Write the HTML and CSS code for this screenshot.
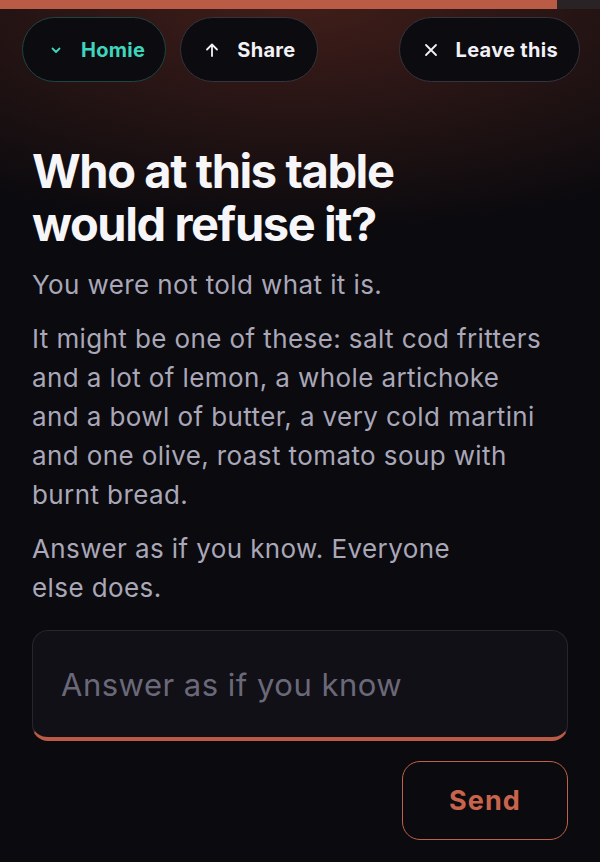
FILE: index.html
```html
<!DOCTYPE html>
<html lang="en">
<head>
<meta charset="utf-8">
<title>Who at this table</title>
<link rel="stylesheet" href="styles.css">
</head>
<body>
<div class="page">
  <div class="progress"><div class="progress-fill" style="width: 92.8%"></div></div>
  <nav class="topbar">
    <div class="topbar-left">
      <button class="pill pill-homie" type="button">
        <svg class="icon icon-chev" viewBox="0 0 16 16" aria-hidden="true"><path d="M4.5 6.5 8 10l3.5-3.5"/></svg>
        <span>Homie</span>
      </button>
      <button class="pill" type="button">
        <svg class="icon" viewBox="0 0 16 16" aria-hidden="true"><path d="M8 14V2.5M3 7.5l5-5 5 5"/></svg>
        <span>Share</span>
      </button>
    </div>
    <button class="pill" type="button">
      <svg class="icon" viewBox="0 0 16 16" aria-hidden="true"><path d="M3 3l10 10M13 3L3 13"/></svg>
      <span>Leave this</span>
    </button>
  </nav>
  <main class="content">
    <h1 class="title">Who at this table would refuse it?</h1>
    <p class="lead">You were not told what it is.</p>
    <p class="lead">It might be one of these: salt cod fritters and a lot of lemon, a whole artichoke and a bowl of butter, a very cold martini and one olive, roast tomato soup with burnt bread.</p>
    <p class="lead lead-narrow">Answer as if you know. Everyone else does.</p>
    <form class="answer" onsubmit="return false">
      <div class="field">
        <input class="field-input" type="text" placeholder="Answer as if you know">
      </div>
      <div class="actions">
        <button class="send" type="submit">Send</button>
      </div>
    </form>
  </main>
</div>
</body>
</html>
```

FILE: styles.css
```css
* { box-sizing: border-box; }
html, body { margin: 0; padding: 0; }
body {
  background: #0b0a0e;
  font-family: Inter, "Noto Sans", "Liberation Sans", sans-serif;
  color: #a9a7b8;
}
.page {
  min-height: 862px;
  background:
    radial-gradient(ellipse 560px 230px at 300px 0px, rgba(118, 50, 38, 0.5), rgba(118, 50, 38, 0) 100%),
    #0b0a0e;
}
.progress {
  height: 9px;
  background: #2a2326;
}
.progress-fill {
  height: 100%;
  background: #b95b45;
}
.topbar {
  display: flex;
  justify-content: space-between;
  align-items: center;
  padding: 8px 20px 0 22px;
}
.topbar-left {
  display: flex;
  gap: 14px;
}
.pill {
  display: flex;
  align-items: center;
  gap: 17px;
  height: 65px;
  padding: 0 21px 0 23px;
  border-radius: 33px;
  border: 1px solid #35333b;
  background: #0c0b10;
  color: #f2f1f5;
  font-family: inherit;
  font-size: 20px;
  font-weight: 700;
  letter-spacing: 0.015em;
}
.pill-homie {
  border-color: #1d4642;
  color: #3fd5bc;
  padding-left: 25px;
  padding-right: 20px;
}
.icon {
  width: 16px;
  height: 16px;
  fill: none;
  stroke: currentColor;
  stroke-width: 1.8;
  stroke-linecap: round;
  stroke-linejoin: round;
}
.content {
  padding: 62px 32px 0 32px;
}
.title {
  margin: 0 0 15px 0;
  max-width: 420px;
  color: #f6f5f8;
  font-size: 47px;
  font-weight: 700;
  line-height: 53px;
  letter-spacing: -0.03em;
}
.lead {
  margin: 0 0 15px 0;
  max-width: 514px;
  font-size: 26px;
  line-height: 39px;
  letter-spacing: 0.4px;
  color: #a9a7b8;
}
.lead-narrow {
  max-width: 450px;
}
.answer {
  margin-top: 23px;
  display: flex;
  flex-direction: column;
  gap: 20px;
}
.field {
  height: 111px;
  border: 1px solid #27262e;
  border-bottom: 4px solid #b95b45;
  border-radius: 16px;
  background: #111016;
  display: flex;
  align-items: center;
  padding: 0 28px;
}
.field-input {
  width: 100%;
  border: 0;
  outline: 0;
  background: transparent;
  font-family: inherit;
  font-size: 31px;
  letter-spacing: 0.5px;
  color: #e8e7ee;
  padding: 0;
}
.field-input::placeholder {
  color: #6b6979;
}
.actions {
  display: flex;
  justify-content: flex-end;
}
.send {
  width: 166px;
  height: 79px;
  border: 1.5px solid #c0604a;
  border-radius: 18px;
  background: #0b0a0e;
  color: #c9644c;
  font-family: inherit;
  font-size: 27px;
  font-weight: 700;
  letter-spacing: 0.04em;
}
```
